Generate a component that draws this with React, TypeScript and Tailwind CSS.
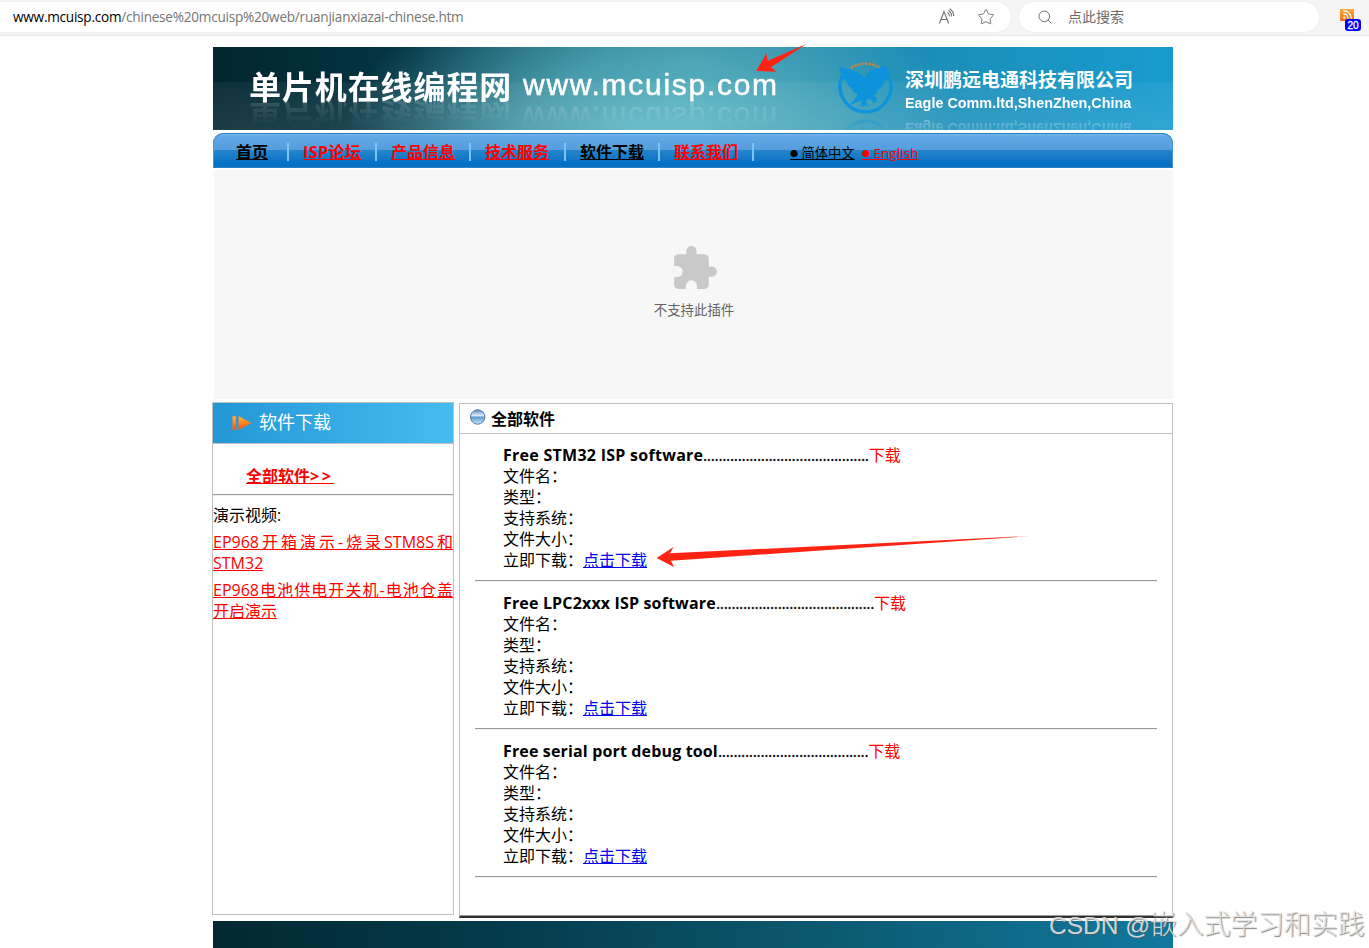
import { Rss, Search, Star } from "lucide-react";

type NavItem = {
  label: string;
  cell: string;
  active?: boolean;
};

type Software = {
  title: string;
  titleClass: string;
  dots: number;
};

const navItems: NavItem[] = [
  { label: "首页", cell: "w-[76px] pl-[23px]", active: true },
  { label: "ISP论坛", cell: "w-[88px] pl-[14px] tracking-[0.4px]" },
  { label: "产品信息", cell: "w-[94px] pl-[14px]" },
  { label: "技术服务", cell: "w-[95px] pl-[14px]" },
  { label: "软件下载", cell: "w-[94px] pl-[14px]", active: true },
  { label: "联系我们", cell: "w-[94px] pl-[14px]" },
];

const softwareList: Software[] = [
  { title: "Free STM32 ISP software", titleClass: "w-[200px] tracking-[0.27px]", dots: 43 },
  { title: "Free LPC2xxx ISP software", titleClass: "w-[213px] tracking-[0.16px]", dots: 41 },
  { title: "Free serial port debug tool", titleClass: "w-[215px] tracking-[0.15px]", dots: 39 },
];

const fields = ["文件名：", "类型：", "支持系统：", "文件大小："];

function BrowserBar() {
  return (
    <div className="flex h-9 items-start border-b border-[#e6e6e6] bg-[#f5f5f5] pt-0.5 text-[13px]">
      <div className="flex h-[30px] w-[1011px] items-center rounded-r-full bg-white pl-[13px] shadow-[0_0_2px_rgba(0,0,0,.08)]">
        <span className="pt-px text-[13.6px] tracking-[-0.24px] whitespace-nowrap text-[#757575]">
          <span className="text-black">www.mcuisp.com</span>
          /chinese%20mcuisp%20web/ruanjianxiazai-chinese.htm
        </span>
        <svg viewBox="0 0 18 18" className="mr-[21px] ml-auto h-[18px] w-[18px]" fill="none" stroke="#707070" strokeWidth="1.1">
          <path d="M1.500 15.500 6 3.500l4.700 12M3 11.500h6.200M9.500 4.500c1.500 1 2 2.300 2 4M10.500 2.500c2.300 1.500 3.200 3.500 3.200 6M11.500.700c3 1.700 4.200 4.300 4.200 7.300" />
        </svg>
        <Star className="mr-[16px] h-[18px] w-[18px] text-[#707070]" strokeWidth={1.3} />
      </div>
      <div className="ml-2 flex h-[30px] w-[300px] items-center rounded-full bg-white pl-[18px] shadow-[0_0_2px_rgba(0,0,0,.08)]">
        <Search className="h-4 w-4 text-[#666]" strokeWidth={1.4} />
        <span className="mb-px ml-[15px] text-[14px] leading-[18px] text-[#6b6b6b]">点此搜索</span>
      </div>
      <div className="relative mt-[7px] ml-[21px] h-3 w-[14px] bg-linear-to-b from-[#f9a93d] to-[#f07316]">
        <Rss className="ml-[2px] h-[11px] w-[11px] text-white" strokeWidth={3} />
        <span className="absolute top-[10px] left-[5px] flex h-3 w-4 items-center justify-center rounded-[3px] bg-[#0000ff] font-['Liberation_Sans'] text-[10px] text-white [-webkit-text-stroke:0.3px_white]">
          20
        </span>
      </div>
    </div>
  );
}

function EagleLogo() {
  return (
    <svg viewBox="50 60 175 172" className="mt-[13px] h-[57px] w-[58px] shrink-0 [-webkit-box-reflect:below_-1px_linear-gradient(transparent_60%,rgba(0,0,0,.4))]">
      <path d="M66 108A77 77 0 1 0 208 112" fill="none" stroke="#0d93dc" strokeWidth="10" />
      <path d="M92 84Q135 58 181 84" fill="none" stroke="#c98344" strokeWidth="7" strokeDasharray="8 3" />
      <path
        d="M56 80Q75 86 96 91Q122 101 135 116Q142 96 162 86L178 84Q187 72 198 80Q210 91 212 107Q206 103 203 109Q198 125 188 134Q184 146 174 151Q168 164 158 169L171 175L168 181L174 187L164 185L162 192L153 180L143 176L138 188L143 203L135 196L127 204L128 195L118 200L128 181L88 195L105 177L112 163Q93 152 91 142Q80 137 80 126Q68 120 70 109Q57 99 56 80Z"
        fill="#0d93dc"
      />
    </svg>
  );
}

function Banner() {
  return (
    <div className="ml-px flex h-[83px] w-[960px] items-start overflow-hidden bg-[linear-gradient(to_bottom,transparent_42%,rgba(255,255,255,.05)_43%,rgba(255,255,255,.1)),radial-gradient(ellipse_310px_180px_at_440px_95px,rgba(104,196,210,.85),rgba(98,186,200,.65)_45%,transparent),linear-gradient(to_right,#02262f,#043746_22%,#0c5062_32%,#2a8297_50%,#1c8cb4_70%,#189bce)] text-white">
      <div className="mt-[22px] ml-[36px] w-[274px] font-['Noto_Sans_CJK_SC'] text-[32px] leading-[32px] font-bold tracking-[0.900px] whitespace-nowrap [-webkit-box-reflect:below_-2px_linear-gradient(transparent_20%,rgba(0,0,0,.16))]">
        单片机在线编程网
      </div>
      <div className="mt-[22px] w-[314px] font-['Liberation_Sans'] text-[30px] leading-[32px] tracking-[1.720px] whitespace-nowrap [-webkit-text-stroke:0.5px_white] [-webkit-box-reflect:below_0px_linear-gradient(transparent_20%,rgba(0,0,0,.2))]">
        www.mcuisp.com
      </div>
      <EagleLogo />
      <div className="mt-[21px] ml-[10px] whitespace-nowrap">
        <div className="font-['Noto_Sans_CJK_SC'] text-[19px] leading-[22px] font-bold">深圳鹏远电通科技有限公司</div>
        <div className="mt-[4px] font-['Liberation_Sans'] text-[14.4px] leading-[18px] font-bold [-webkit-box-reflect:below_7px_linear-gradient(transparent_10%,rgba(0,0,0,.35))]">
          Eagle Comm.ltd,ShenZhen,China
        </div>
      </div>
    </div>
  );
}

function Nav() {
  return (
    <nav className="mt-[3px] ml-px flex h-[35px] w-[960px] items-center rounded-t-[10px] border-t border-b border-t-[#287fc0] border-b-[#2d80c4] bg-[linear-gradient(to_bottom,#7db8ee_0,#64a8e6_6%,#559ddc_48%,#2585cd_50%,#0670c3_90%)] pt-[3px] shadow-[inset_1px_0_#4b98d6,inset_-1px_0_#4b98d6]">
      {navItems.map((item) => (
        <div key={item.label} className={`flex items-center justify-between ${item.cell}`}>
          <a
            href="#"
            className={`text-[16px] leading-[21px] font-bold whitespace-nowrap underline ${item.active ? "text-black" : "text-[#ff0000]"}`}
          >
            {item.label}
          </a>
          <span className="h-[18px] w-[2px] bg-[#7cc3fa]" />
        </div>
      ))}
      <div className="ml-9 flex gap-[7px] pt-[3px] text-[13.3px] leading-[18px] whitespace-nowrap">
        <a href="#" className="text-black underline">
          <span className="align-[1px] text-[8px]">●</span> 简体中文
        </a>
        <a href="#" className="tracking-[0.15px] text-[#ff0000] underline">
          <span className="align-[1px] text-[8px]">●</span> English
        </a>
      </div>
    </nav>
  );
}

function PluginPlaceholder() {
  return (
    <div className="mt-[2px] ml-[2px] flex h-[229px] w-[959px] flex-col items-center bg-[#f7f7f7] pt-[74px]">
      <svg viewBox="0 0 24 24" className="ml-px h-[49px] w-[49px]" fill="#c9c9c9">
        <path d="M20.500 11H19V7c0-1.100-.9-2-2-2h-4V3.500a2.500 2.500 0 0 0-5 0V5H4c-1.100 0-2 .9-2 2v3.800h1.500a2.700 2.700 0 0 1 0 5.400H2V20c0 1.100.9 2 2 2h3.800v-1.500a2.700 2.700 0 0 1 5.400 0V22H17c1.100 0 2-.9 2-2v-4h1.500a2.500 2.500 0 0 0 0-5z" />
      </svg>
      <div className="mt-[8px] ml-px text-[13.400px] leading-[18px] text-[#646464]">不支持此插件</div>
    </div>
  );
}

function Rule() {
  return <hr className="h-[2px] border-t border-b border-t-[#9a9a9a] border-b-[#eeeeee]" />;
}

function VideoLink({ first, second }: { first: string; second: string }) {
  return (
    <a href="#" className="mb-[6px] block leading-[21px] whitespace-nowrap text-[#ff0000] underline">
      <span className="block [text-align-last:justify]">{first}</span>
      <span className="block">{second}</span>
    </a>
  );
}

function Sidebar() {
  return (
    <aside className="h-[513px] w-[242px] border border-[#c0c0c0]">
      <div className="flex h-[41px] items-center border-b border-[#c0c0c0] bg-linear-to-r from-[#2397d6] to-[#46bcf1] pl-[18px]">
        <svg viewBox="0 0 22 18" className="h-[18px] w-[22px]">
          <defs>
            <linearGradient id="play" x1="0" y1="0" x2="0" y2="1">
              <stop offset="0" stopColor="#ffc02e" />
              <stop offset="1" stopColor="#fb4a12" />
            </linearGradient>
          </defs>
          <path d="M1.500 2h3.500v14H1.500zM7.500 2 20.500 9l-13 7z" fill="url(#play)" stroke="#a08a7c" strokeWidth=".6" />
        </svg>
        <span className="mb-px ml-[6px] text-[18px] text-white">软件下载</span>
      </div>
      <div className="h-[50px] pt-[22px] pl-[33px]">
        <a href="#" className="block leading-[21px] font-bold text-[#ff0000]">
          <span className="underline">全部软件<span className="tracking-[2.700px]">&gt;&gt;</span></span>
        </a>
      </div>
      <Rule />
      <div className="mt-[9px] mb-[6px] leading-[21px]">演示视频:</div>
      <VideoLink first="EP968开箱演示-烧录STM8S和" second="STM32" />
      <VideoLink first="EP968电池供电开关机-电池仓盖" second="开启演示" />
    </aside>
  );
}

function SoftwareItem({ item }: { item: Software }) {
  return (
    <>
      <div className="mb-[9px] pl-[28px] leading-[21px] whitespace-nowrap">
        <div className="flex h-[21px]">
          <b className={item.titleClass}>{item.title}</b>
          <span className="tracking-[-0.350px] [-webkit-text-stroke:0.3px_black]">{".".repeat(item.dots)}</span>
          <span className="text-[#ff0000]">下载</span>
        </div>
        {fields.map((field) => (
          <div key={field} className="h-[21px]">{field}</div>
        ))}
        <div className="h-[21px]">
          立即下载：
          <a href="#" className="text-[#0000ee] underline">点击下载</a>
        </div>
      </div>
      <Rule />
    </>
  );
}

function SoftwarePanel() {
  return (
    <main className="mt-px h-[515px] w-[714px] border border-b-2 border-[#c0c0c0] border-b-[#303030] shadow-[inset_0_-1px_#999]">
      <div className="flex h-[30px] items-center border-b border-[#c0c0c0] pl-[10px]">
        <svg viewBox="0 0 16 16" className="mb-[3px] h-4 w-4">
          <defs>
            <linearGradient id="ball" x1="0" y1="0" x2="0" y2="1">
              <stop offset="0" stopColor="#5a8ac4" />
              <stop offset=".42" stopColor="#e2effa" />
              <stop offset=".5" stopColor="#5d97cf" />
              <stop offset="1" stopColor="#cdeafc" />
            </linearGradient>
          </defs>
          <circle cx="7.700" cy="8" r="7.200" fill="url(#ball)" stroke="#56779f" />
        </svg>
        <span className="ml-[5px] font-bold">全部软件</span>
      </div>
      <div className="mx-[15px] pt-[11px] [&>hr]:mb-[11px]">
        {softwareList.map((item) => (
          <SoftwareItem key={item.title} item={item} />
        ))}
      </div>
    </main>
  );
}

export default function App() {
  return (
    <div lang="zh-CN" className="relative h-[948px] w-[1369px] overflow-hidden bg-white font-['Open_Sans','Noto_Sans_CJK_SC',sans-serif] text-[16px] text-black">
      <BrowserBar />
      <div className="mt-[11px] ml-[212px] w-[961px]">
        <Banner />
        <Nav />
        <PluginPlaceholder />
        <div className="mt-[3px] flex items-start gap-[5px]">
          <Sidebar />
          <SoftwarePanel />
        </div>
        <div className="mt-[3px] ml-px h-[27px] bg-[linear-gradient(to_right,#022832,#043b4b_30%,#0b566b_60%,#11799f)]" />
      </div>

      {/* red pointers */}
      <svg className="pointer-events-none absolute inset-0" width="1369" height="948" fill="#ff2314">
        <path d="M756 71 766.500 53.500 767.700 60.700 806.500 44 771 67.300 776.500 71.700Z" />
        <path d="M656.500 558 673.500 547 670 553.300 1031 536 671 560.700 674 567Z" />
      </svg>

      <div className="absolute top-[908px] left-[1049px] font-['Liberation_Sans','Noto_Sans_CJK_SC',sans-serif] text-[26.800px] leading-[34px] font-light whitespace-nowrap text-[#e4e4e4]/90 [text-shadow:1px_1px_1px_rgba(90,90,90,.75)]">
        <span className="text-[24.5px]">CSDN @</span>嵌入式学习和实践
      </div>
    </div>
  );
}
